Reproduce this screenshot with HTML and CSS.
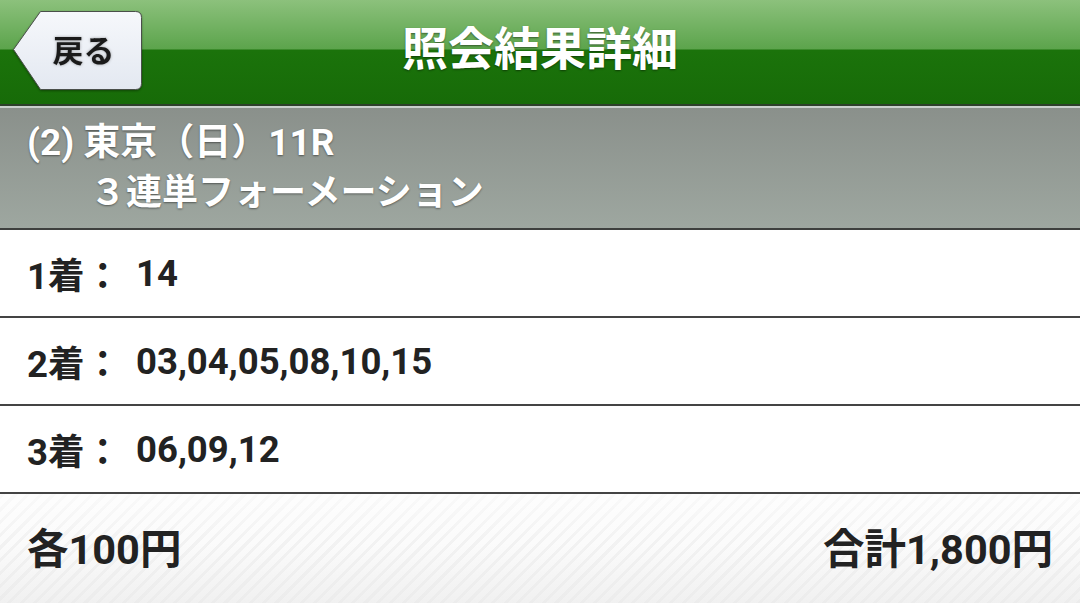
FILE: index.html
```html
<!DOCTYPE html>
<html lang="ja">
<head>
<meta charset="utf-8">
<link rel="stylesheet" href="styles.css">
</head>
<body>
<header class="topbar">
  <a class="back">
    <svg class="back-shape" width="131" height="80" viewBox="0 0 131 80">
      <defs>
        <linearGradient id="bg" x1="0" y1="0" x2="0" y2="1">
          <stop offset="0" stop-color="#f6f8fb"/>
          <stop offset="1" stop-color="#e3e8f1"/>
        </linearGradient>
      </defs>
      <path d="M28.5 0.5 H123.5 Q129.5 0.5 129.5 6.5 V72.5 Q129.5 78.5 123.5 78.5 H28.5 L1.5 38.5 Z" fill="url(#bg)" stroke="#4a4f4a" stroke-width="1"/>
    </svg>
    <span class="back-label">戻る</span>
  </a>
  <h1 class="title">照会結果詳細</h1>
</header>
<section class="race">
  <div class="race-line">(2) 東京（日）11R</div>
  <div class="race-line race-type">３連単フォーメーション</div>
</section>
<ul class="picks">
  <li class="pick"><span class="pick-label">1着：</span><span class="pick-nums">14</span></li>
  <li class="pick"><span class="pick-label">2着：</span><span class="pick-nums">03,04,05,08,10,15</span></li>
  <li class="pick"><span class="pick-label">3着：</span><span class="pick-nums">06,09,12</span></li>
</ul>
<footer class="summary">
  <span>各100円</span>
  <span>合計1,800円</span>
</footer>
</body>
</html>
```

FILE: styles.css
```css
* { box-sizing: border-box; }
html, body { margin: 0; padding: 0; }
body {
  width: 1080px;
  height: 603px;
  overflow: hidden;
  font-family: Roboto, "Noto Sans CJK JP", sans-serif;
  background: #fff;
}
.topbar {
  position: relative;
  height: 108px;
  display: flex;
  align-items: center;
  justify-content: center;
  background: linear-gradient(to bottom, #8cc17c 0px, #5ca44c 49px, #1b730b 50px, #176b08 104px, #2d3f2b 104px, #2d3f2b 106px, #c9d0cc 106px, #c9d0cc 108px);
}
.back {
  position: absolute;
  left: 12px;
  top: 11px;
  width: 131px;
  height: 80px;
  display: flex;
  align-items: center;
  justify-content: center;
  padding-left: 12px;
  filter: drop-shadow(0 1px 1px rgba(0,0,0,0.35));
}
.back-shape { position: absolute; left: 0; top: 0; }
.back-label {
  position: relative;
  font-size: 31px;
  font-weight: 700;
  color: #1a1a1a;
  text-shadow: 0 0 3px rgba(0,0,0,0.35);
  margin-top: -6px;
}
.title {
  margin: 0 0 18px 0;
  font-size: 46px;
  font-weight: 700;
  color: #fff;
  letter-spacing: 0;
  text-shadow: 0 1px 2px rgba(0,0,0,0.45);
}
.race {
  height: 122px;
  padding: 10px 0 0 27px;
  background: linear-gradient(to bottom, #8a908b, #9ea7a0);
  border-bottom: 2px solid #3e403e;
  color: #fff;
  font-size: 36px;
  font-weight: 700;
  text-shadow: 0 1px 2px rgba(0,0,0,0.45);
}
.race-line { line-height: 50px; height: 50px; }
.race-line:first-child { font-size: 37px; }
.race-type { padding-left: 63px; }
.picks { list-style: none; margin: 0; padding: 0; }
.pick {
  height: 88px;
  display: flex;
  align-items: center;
  padding-left: 27px;
  border-bottom: 2px solid #444;
  font-size: 36.5px;
  font-weight: 700;
  color: #222;
}
.pick-label { width: 109px; }
.summary {
  height: 109px;
  display: flex;
  align-items: center;
  justify-content: space-between;
  padding: 0 27px 6px 27px;
  font-size: 41.5px;
  font-weight: 700;
  color: #222;
  background:
    linear-gradient(to bottom, rgba(255,255,255,0.6), rgba(255,255,255,0) 45%, rgba(230,230,230,0.5)),
    repeating-linear-gradient(-45deg, #f2f2f2 0px, #f2f2f2 3px, #fbfbfb 3px, #fbfbfb 9px);
}
```
